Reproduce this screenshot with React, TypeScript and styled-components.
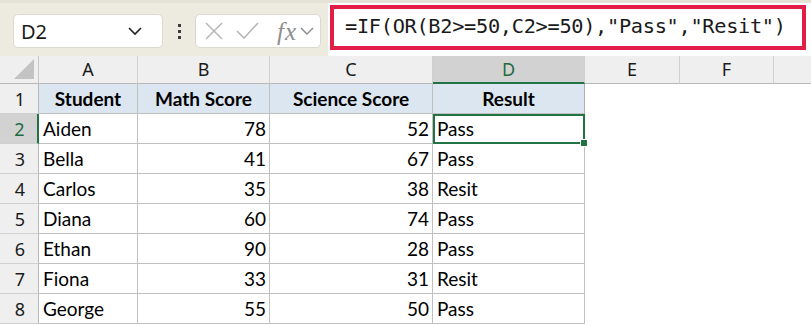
import React from 'react';
import styled, { createGlobalStyle } from 'styled-components';

const GlobalStyle = createGlobalStyle`
  html, body {
    margin: 0;
    padding: 0;
    background: #ffffff;
    overflow: hidden;
  }
`;

const columns = ['A', 'B', 'C', 'D', 'E', 'F', ''];
const widths = [39, 99, 132, 163, 152, 95, 94];

const rows = [
  ['Aiden', '78', '52', 'Pass'],
  ['Bella', '41', '67', 'Pass'],
  ['Carlos', '35', '38', 'Resit'],
  ['Diana', '60', '74', 'Pass'],
  ['Ethan', '90', '28', 'Pass'],
  ['Fiona', '33', '31', 'Resit'],
  ['George', '55', '50', 'Pass'],
];

const App = () => {
  return (
    <>
      <GlobalStyle />
      <Page>
        <Toolbar>
          <NameBox>
            <span>D2</span>
            <Chevron width="16" height="10" viewBox="0 0 16 10">
              <path d="M2 2 L8 8 L14 2" fill="none" stroke="#222" strokeWidth="1.6" />
            </Chevron>
          </NameBox>
          <Grip>
            <i />
            <i />
            <i />
          </Grip>
          <FxBox>
            <svg width="20" height="20" viewBox="0 0 20 20">
              <path d="M2 2 L18 18 M18 2 L2 18" stroke="#b8b8b8" strokeWidth="1.6" fill="none" />
            </svg>
            <svg width="24" height="20" viewBox="0 0 24 20">
              <path d="M2 10 L9 17 L23 2" stroke="#b8b8b8" strokeWidth="1.6" fill="none" />
            </svg>
            <FxLabel>fx</FxLabel>
            <svg width="14" height="10" viewBox="0 0 14 10">
              <path d="M1 2 L7 8 L13 2" fill="none" stroke="#8a8a8a" strokeWidth="1.4" />
            </svg>
          </FxBox>
          <FormulaBar>
            <Formula>=IF(OR(B2&gt;=50,C2&gt;=50),"Pass","Resit")</Formula>
          </FormulaBar>
        </Toolbar>

        <Sheet>
          <Corner>
            <svg width="22" height="22" viewBox="0 0 22 22">
              <polygon points="21,1 21,21 1,21" fill="#c3c3c3" />
            </svg>
          </Corner>
          {columns.map((c, i) => (
            <ColHeader key={c + i} $active={c === 'D'} $last={i === columns.length - 1}>
              {c}
            </ColHeader>
          ))}

          <RowHeader>1</RowHeader>
          <HeadCell>Student</HeadCell>
          <HeadCell>Math Score</HeadCell>
          <HeadCell>Science Score</HeadCell>
          <HeadCell $edge>Result</HeadCell>
          <Blank />
          <Blank />
          <Blank />

          {rows.map((r, i) => (
            <React.Fragment key={r[0]}>
              <RowHeader $active={i === 0}>{i + 2}</RowHeader>
              <Cell>{r[0]}</Cell>
              <Cell $num>{r[1]}</Cell>
              <Cell $num>{r[2]}</Cell>
              <Cell $edge $selected={i === 0}>
                {r[3]}
                {i === 0 && <FillHandle />}
              </Cell>
              <Blank />
              <Blank />
              <Blank />
            </React.Fragment>
          ))}
        </Sheet>
      </Page>
    </>
  );
};

const Page = styled.div`
  width: 811px;
  height: 326px;
  overflow: hidden;
  font-family: 'Lato', 'Open Sans', sans-serif;
`;

const Toolbar = styled.div`
  height: 56px;
  box-sizing: border-box;
  background: #edebdf;
  border-top: 3px solid #e4e2d6;
  display: flex;
  align-items: center;
  padding-left: 13px;
`;

const NameBox = styled.div`
  width: 150px;
  height: 34px;
  box-sizing: border-box;
  background: #ffffff;
  border: 1px solid #dcdad0;
  border-radius: 5px;
  display: flex;
  align-items: center;
  justify-content: space-between;
  padding: 0 19px 0 7px;
  font-family: 'Noto Sans', 'Open Sans', sans-serif;
  font-size: 20px;
  color: #1b1b1b;
  margin-top: 3px;
`;

const Chevron = styled.svg`
  display: block;
`;

const Grip = styled.div`
  width: 32px;
  display: flex;
  flex-direction: column;
  align-items: center;
  gap: 3px;
  margin-top: 3px;

  i {
    display: block;
    width: 3px;
    height: 3px;
    background: #3c3c3c;
  }
`;

const FxBox = styled.div`
  width: 126px;
  height: 34px;
  box-sizing: border-box;
  background: #ffffff;
  border: 1px solid #dcdad0;
  border-radius: 5px;
  display: flex;
  align-items: center;
  padding: 0 3px 0 8px;
  gap: 11px;
  margin-top: 3px;

  svg {
    display: block;
    flex: none;
  }
`;

const FxLabel = styled.span`
  font-family: 'Liberation Serif', serif;
  font-style: italic;
  font-size: 25px;
  color: #8e8e8e;
  margin-left: 7px;
  margin-right: -8px;
  line-height: 1;
  letter-spacing: 1px;
`;

const FormulaBar = styled.div`
  flex: 1;
  align-self: stretch;
  margin-left: 7px;
  background: #ffffff;
  display: flex;
  align-items: center;
  padding: 0 5px 5px 2px;
`;

const Formula = styled.div`
  box-sizing: border-box;
  width: 476px;
  height: 45px;
  border: 4px solid #e11d48;
  display: flex;
  align-items: center;
  padding-left: 11px;
  padding-bottom: 2px;
  font-family: 'DejaVu Sans Mono', 'Liberation Mono', monospace;
  font-size: 20.3px;
  letter-spacing: -0.3px;
  color: #1a1a1a;
  white-space: nowrap;
`;

const Sheet = styled.div`
  display: grid;
  grid-template-columns: ${widths.map((w) => w + 'px').join(' ')} 1fr;
  grid-template-rows: 28px repeat(8, 30px);
  font-size: 19px;
  color: #000;
`;

const Corner = styled.div`
  background: #efefef;
  border-right: 1px solid #c8c8c8;
  border-bottom: 1px solid #b8b8b8;
  display: flex;
  align-items: flex-end;
  justify-content: flex-end;
  padding: 0 3px 3px 0;
`;

const ColHeader = styled.div<{ $active?: boolean; $last?: boolean }>`
  background: ${(p) => (p.$active ? '#d2d2d2' : '#efefef')};
  border-right: ${(p) => (p.$last ? 'none' : '1px solid #d0d0d0')};
  border-bottom: ${(p) => (p.$active ? '2px solid #217346' : '1px solid #b8b8b8')};
  color: ${(p) => (p.$active ? '#1f6b41' : '#1b1b1b')};
  font-family: 'Noto Sans', 'Open Sans', sans-serif;
  font-size: 18px;
  display: flex;
  align-items: center;
  justify-content: center;
  padding-bottom: 1px;
`;

const RowHeader = styled.div<{ $active?: boolean }>`
  background: ${(p) => (p.$active ? '#d2d2d2' : '#efefef')};
  border-right: ${(p) => (p.$active ? '2px solid #217346' : '1px solid #b8b8b8')};
  border-bottom: 1px solid #d0d0d0;
  color: ${(p) => (p.$active ? '#1f6b41' : '#1b1b1b')};
  font-family: 'Noto Sans', 'Open Sans', sans-serif;
  font-size: 18px;
  display: flex;
  align-items: center;
  justify-content: center;
  padding-left: 2px;
`;

const HeadCell = styled.div<{ $edge?: boolean }>`
  background: #dce6f0;
  border-right: 1px solid ${(p) => (p.$edge ? '#b0b0b0' : '#c0c0c0')};
  border-bottom: 1px solid #c0c0c0;
  font-weight: 700;
  display: flex;
  align-items: center;
  justify-content: center;
`;

const Cell = styled.div<{ $num?: boolean; $edge?: boolean; $selected?: boolean }>`
  position: relative;
  background: #ffffff;
  border-right: 1px solid #c0c0c0;
  border-bottom: 1px solid #c0c0c0;
  display: flex;
  align-items: center;
  justify-content: ${(p) => (p.$num ? 'flex-end' : 'flex-start')};
  padding: ${(p) => (p.$num ? '0 3px 0 0' : '0 0 0 4px')};
  ${(p) =>
    p.$selected &&
    `
    outline: 2px solid #217346;
    outline-offset: -2px;
    z-index: 1;
  `}
`;

const FillHandle = styled.span`
  position: absolute;
  right: -4px;
  bottom: -4px;
  width: 6px;
  height: 6px;
  background: #217346;
  border: 1px solid #ffffff;
`;

const Blank = styled.div`
  background: #ffffff;
`;

export default App;
